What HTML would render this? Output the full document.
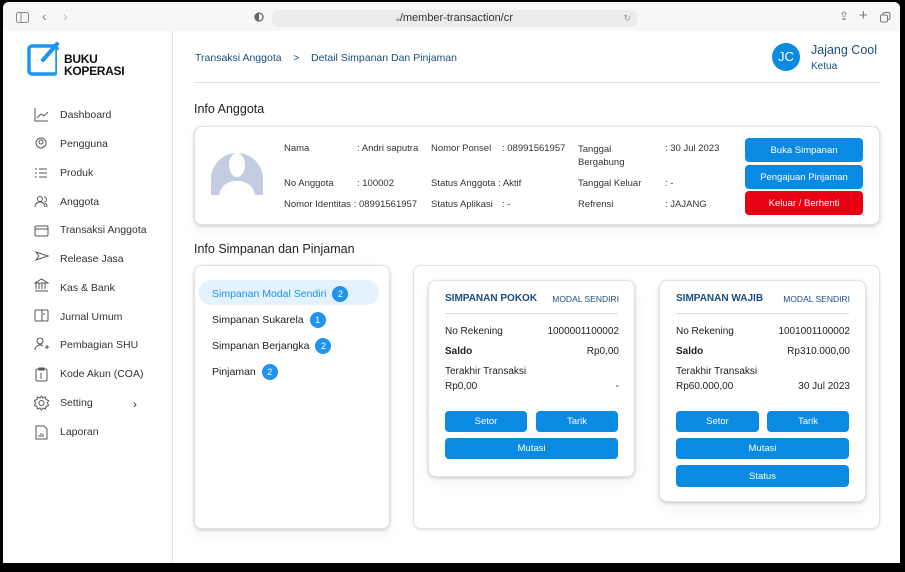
<!DOCTYPE html>
<html><head><meta charset="utf-8"><style>
*{box-sizing:border-box;margin:0;padding:0}
body{width:905px;height:572px;background:#000;font-family:"Liberation Sans",sans-serif;position:relative;overflow:hidden;color:#222}
.win{position:absolute;left:3px;top:2px;width:897px;height:561px;background:#fff;border-radius:6px 6px 0 0;overflow:hidden}
.bar{position:absolute;left:0;top:0;width:100%;height:29px;background:#f7f7f7}
.url{position:absolute;left:269px;top:8px;width:365px;height:17px;background:#ececec;border-radius:5px;font-size:11px;color:#333;text-align:center;line-height:17px}
.abs{position:absolute}
.side{position:absolute;left:0;top:29px;width:170px;height:540px;border-right:1px solid #e3e3e3}
.nav{position:absolute;left:57px;font-size:10.5px;color:#333}
.t{position:absolute;font-size:9.5px;color:#333;white-space:nowrap}
.card{position:absolute;background:#fff;border-radius:8px;box-shadow:0 1px 3px rgba(0,0,0,.18),0 6px 14px rgba(0,0,0,.05);border:1px solid #e2e2e2}
.btn{position:absolute;background:#0a8ae3;color:#fff;border-radius:4px;font-size:9.5px;display:flex;align-items:center;justify-content:center}
.badge{display:inline-block;width:16px;height:16px;border-radius:50%;background:#1f93ee;color:#fff;font-size:9px;text-align:center;line-height:16px;margin-left:6px;vertical-align:middle}
.li{position:absolute;left:17px;font-size:10.5px;color:#222}
.s{font-size:10px;color:#222}
</style></head><body>
<div class="win">
<div class="bar">
<svg class="abs" style="left:13px;top:10px" width="14" height="11"><rect x=".5" y=".5" width="12" height="10" rx="2" fill="none" stroke="#888"/><line x1="5" y1="1" x2="5" y2="10" stroke="#888"/></svg>
<div class="abs" style="left:39px;top:6px;color:#888;font-size:14px">‹</div>
<div class="abs" style="left:60px;top:6px;color:#bbb;font-size:14px">›</div>
<svg class="abs" style="left:251px;top:10px" width="10" height="10"><circle cx="5" cy="5" r="4" fill="none" stroke="#666" stroke-width="1.3"/><path d="M5 1a4 4 0 0 0 0 8z" fill="#666"/></svg>
<div class="url"><span style="font-size:7px;color:#999">🔒︎</span>/member-transaction/cr<span style="position:absolute;right:6px;color:#999;font-size:9px">↻</span></div>
<div class="abs" style="left:836px;top:7px;color:#777;font-size:12px">⇪</div>
<div class="abs" style="left:856px;top:5px;color:#777;font-size:15px">+</div>
<svg class="abs" style="left:877px;top:10px" width="11" height="11"><rect x="3" y=".5" width="7" height="7" rx="1.5" fill="none" stroke="#777"/><rect x=".5" y="3" width="7" height="7" rx="1.5" fill="#f7f7f7" stroke="#777"/></svg>
</div>
<div class="side">
<svg class="abs" style="left:24px;top:9px" width="40" height="38"><rect x="2" y="6" width="28" height="28" rx="3" fill="none" stroke="#1a96f0" stroke-width="3.5"/><rect x="30" y="10" width="10" height="26" fill="#fff"/><path d="M16 20 L30 4" stroke="#1a96f0" stroke-width="4" stroke-linecap="round"/></svg>
<div class="abs" style="left:61px;top:22px;font-size:12px;font-weight:bold;line-height:12px;color:#111;letter-spacing:-.3px">BUKU<br>KOPERASI</div>
<div class="nav" style="top:78px">Dashboard</div>
<div class="nav" style="top:107px">Pengguna</div>
<div class="nav" style="top:136px">Produk</div>
<div class="nav" style="top:165px">Anggota</div>
<div class="nav" style="top:193px">Transaksi Anggota</div>
<div class="nav" style="top:222px">Release Jasa</div>
<div class="nav" style="top:251px">Kas &amp; Bank</div>
<div class="nav" style="top:280px">Jurnal Umum</div>
<div class="nav" style="top:308px">Pembagian SHU</div>
<div class="nav" style="top:337px">Kode Akun (COA)</div>
<div class="nav" style="top:366px">Setting</div>
<div class="nav" style="top:366px;left:130px;font-size:12px">›</div>
<div class="nav" style="top:395px">Laporan</div>
<svg class="abs" style="left:31px;top:76px" width="16" height="340" fill="none" stroke="#555" stroke-width="1">
<path d="M1 1v13h13M3 11l4-4 3 2 4-4"/>
<circle cx="7" cy="36" r="5"/><circle cx="7" cy="35" r="2"/>
<path d="M1 62h2M1 66h2M1 70h2M5 62h8M5 66h8M5 70h8"/>
<circle cx="6" cy="92" r="2.5"/><path d="M1 100a5 5 0 0 1 10 0M10 90a2.5 2.5 0 0 1 0 5M13 100a4 4 0 0 0-2-4"/>
<rect x="1" y="119" width="13" height="10" rx="1.5"/><path d="M1 122h13"/>
<path d="M2 145l12 4-12 4 3-4z"/>
<path d="M1 184h13M2 182v-6M5 182v-6M8 182v-6M11 182v-6M1 176l6.5-4 6.5 4z"/>
<rect x="1" y="203" width="13" height="11" rx="1"/><path d="M8 203v11M10 206v2"/>
<circle cx="6" cy="234" r="3"/><path d="M1 243a5 5 0 0 1 8-4M11 240h4M13 238v4"/>
<rect x="2" y="262" width="11" height="12" rx="1.5"/><path d="M5 261h5v2H5zM7 266v6"/>
<circle cx="7.5" cy="296" r="2.5"/><path d="M7.5 289l1.5 2 2.5-1 .5 2.5 2.5 1-1 2.5 1 2.5-2.5 1-.5 2.5-2.5-1-1.5 2-1.5-2-2.5 1-.5-2.5-2.5-1 1-2.5-1-2.5 2.5-1 .5-2.5 2.5 1z"/>
<path d="M2 319h8l3 3v10H2zM5 330v-2M7 330v-4M9 330v-3"/>
</svg>
</div>
<div class="abs" style="left:192px;top:50px;font-size:10.5px;color:#1b4d7c">Transaksi Anggota &nbsp;&nbsp;&nbsp;&gt;&nbsp;&nbsp;&nbsp; Detail Simpanan Dan Pinjaman</div>
<div class="abs" style="left:191px;top:80px;width:686px;height:1px;background:#e3e3e3"></div>
<div class="abs" style="left:769px;top:41px;width:28px;height:28px;border-radius:50%;background:#0a8ae3;color:#fff;font-size:13px;text-align:center;line-height:28px">JC</div>
<div class="abs" style="left:808px;top:41px;font-size:12.5px;color:#1b4d7c">Jajang Cool</div>
<div class="abs" style="left:808px;top:59px;font-size:10px;color:#1b4d7c">Ketua</div>
<div class="abs" style="left:191px;top:100px;font-size:12.5px;color:#222">Info Anggota</div>
<div class="card" style="left:191px;top:124px;width:686px;height:99px">
<svg class="abs" style="left:16px;top:24px" width="52" height="44"><path d="M0 44V28A26 26 0 0 1 52 28v16z" fill="#c5cbe0"/><ellipse cx="26" cy="14" rx="8" ry="12" fill="#fff"/><path d="M8 44c2-10 8-12 14-14h8c6 2 12 4 14 14z" fill="#fff"/></svg>
<div class="t" style="left:89px;top:16px">Nama</div><div class="t" style="left:162px;top:16px">: Andri saputra</div>
<div class="t" style="left:236px;top:16px">Nomor Ponsel</div><div class="t" style="left:307px;top:16px">: 08991561957</div>
<div class="t" style="left:383px;top:16px;line-height:13px">Tanggal<br>Bergabung</div><div class="t" style="left:470px;top:16px">: 30 Jul 2023</div>
<div class="t" style="left:89px;top:51px">No Anggota</div><div class="t" style="left:162px;top:51px">: 100002</div>
<div class="t" style="left:236px;top:51px">Status Anggota : Aktif</div>
<div class="t" style="left:383px;top:51px">Tanggal Keluar</div><div class="t" style="left:470px;top:51px">: -</div>
<div class="t" style="left:89px;top:72px">Nomor Identitas : 08991561957</div>
<div class="t" style="left:236px;top:72px">Status Aplikasi</div><div class="t" style="left:307px;top:72px">: -</div>
<div class="t" style="left:383px;top:72px">Refrensi</div><div class="t" style="left:470px;top:72px">: JAJANG</div>
<div class="btn" style="left:550px;top:11px;width:118px;height:24px">Buka Simpanan</div>
<div class="btn" style="left:550px;top:38px;width:118px;height:24px">Pengajuan Pinjaman</div>
<div class="btn" style="left:550px;top:64px;width:118px;height:24px;background:#e60012">Keluar / Berhenti</div>
</div>
<div class="abs" style="left:191px;top:240px;font-size:12.5px;color:#222">Info Simpanan dan Pinjaman</div>
<div class="card" style="left:191px;top:263px;width:196px;height:264px">
<div class="abs" style="left:4px;top:14px;width:180px;height:25px;border-radius:13px;background:#e3f2fc"></div>
<div class="li" style="top:20px;color:#1a96e8">Simpanan Modal Sendiri<span class="badge">2</span></div>
<div class="li" style="top:46px">Simpanan Sukarela<span class="badge">1</span></div>
<div class="li" style="top:72px">Simpanan Berjangka<span class="badge">2</span></div>
<div class="li" style="top:98px">Pinjaman<span class="badge">2</span></div>
</div>
<div class="card" style="left:410px;top:263px;width:467px;height:264px;box-shadow:0 1px 3px rgba(0,0,0,.12)">
<div class="card" style="left:14px;top:14px;width:207px;height:197px">
<div class="abs s" style="left:16px;top:12px;font-weight:bold;color:#1b4d7c">SIMPANAN POKOK</div>
<div class="abs" style="right:15px;top:13px;font-size:8.5px;color:#1b4d7c">MODAL SENDIRI</div>
<div class="abs" style="left:16px;top:32px;width:173px;height:1px;background:#ddd"></div>
<div class="abs s" style="left:16px;top:45px">No Rekening</div><div class="abs s" style="right:15px;top:45px">1000001100002</div>
<div class="abs s" style="left:16px;top:65px;font-weight:bold">Saldo</div><div class="abs s" style="right:15px;top:65px">Rp0,00</div>
<div class="abs s" style="left:16px;top:85px">Terakhir Transaksi</div>
<div class="abs s" style="left:16px;top:100px">Rp0,00</div><div class="abs s" style="right:15px;top:100px">-</div>
<div class="btn" style="left:16px;top:130px;width:82px;height:21px">Setor</div>
<div class="btn" style="left:107px;top:130px;width:82px;height:21px">Tarik</div>
<div class="btn" style="left:16px;top:157px;width:173px;height:21px">Mutasi</div>
</div>
<div class="card" style="left:245px;top:14px;width:207px;height:222px">
<div class="abs s" style="left:16px;top:12px;font-weight:bold;color:#1b4d7c">SIMPANAN WAJIB</div>
<div class="abs" style="right:15px;top:13px;font-size:8.5px;color:#1b4d7c">MODAL SENDIRI</div>
<div class="abs" style="left:16px;top:32px;width:173px;height:1px;background:#ddd"></div>
<div class="abs s" style="left:16px;top:45px">No Rekening</div><div class="abs s" style="right:15px;top:45px">1001001100002</div>
<div class="abs s" style="left:16px;top:65px;font-weight:bold">Saldo</div><div class="abs s" style="right:15px;top:65px">Rp310.000,00</div>
<div class="abs s" style="left:16px;top:85px">Terakhir Transaksi</div>
<div class="abs s" style="left:16px;top:100px">Rp60.000,00</div><div class="abs s" style="right:15px;top:100px">30 Jul 2023</div>
<div class="btn" style="left:16px;top:130px;width:83px;height:21px">Setor</div>
<div class="btn" style="left:107px;top:130px;width:82px;height:21px">Tarik</div>
<div class="btn" style="left:16px;top:157px;width:173px;height:21px">Mutasi</div>
<div class="btn" style="left:16px;top:184px;width:173px;height:22px">Status</div>
</div>
</div>
</div>
</body></html>
